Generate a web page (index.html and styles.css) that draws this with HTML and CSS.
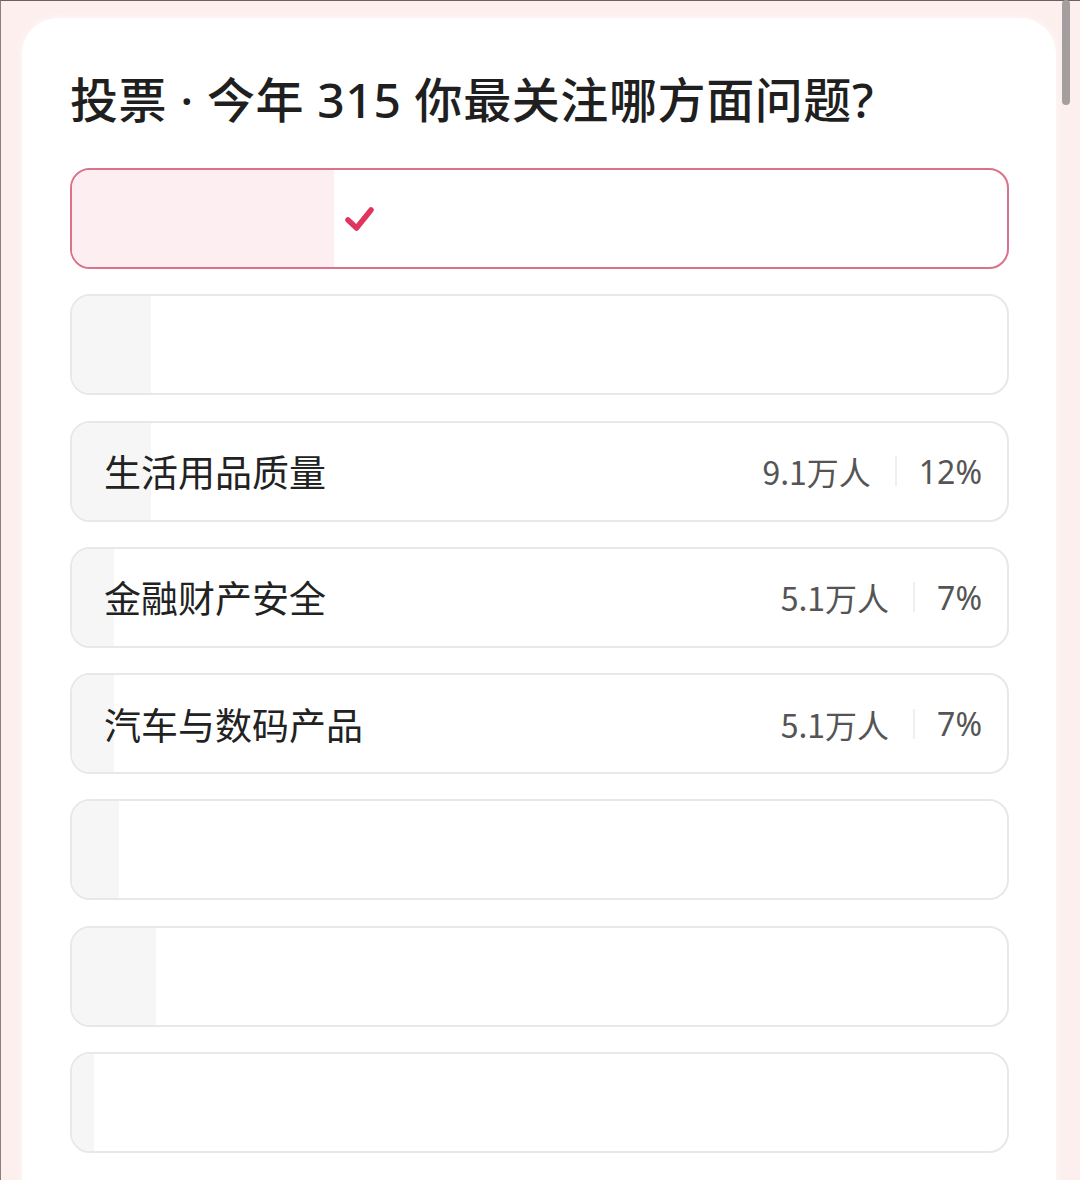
FILE: index.html
```html
<!DOCTYPE html>
<html>
<head>
  <meta charset="utf-8">
  <meta name="viewport" content="width=device-width">
  <title>投票</title>
  <link rel="stylesheet" href="styles.css">
</head>
<body>
  <div class="scrollbar"></div>
  <div class="card">
    <h1 class="title">投票 · 今年 315 你最关注哪方面问题?</h1>
    <div class="options">
      <div class="option on">
        <div class="bar" style="width: 28%;"></div>
        <svg class="check" width="32" height="30" viewBox="0 0 32 30">
          <path d="M4 16 L12.5 24 L27 6" fill="none" stroke="#e0355c" stroke-width="5.5" stroke-linecap="round" stroke-linejoin="round"/>
        </svg>
      </div>
      <div class="option">
        <div class="bar" style="width: 8.4%;"></div>
      </div>
      <div class="option">
        <div class="bar" style="width: 8.4%;"></div>
        <span class="label">生活用品质量</span>
        <span class="stat">
          <span class="count">9.1万人</span>
          <span class="sep"></span>
          <span class="pct">12%</span>
        </span>
      </div>
      <div class="option">
        <div class="bar" style="width: 4.5%;"></div>
        <span class="label">金融财产安全</span>
        <span class="stat">
          <span class="count">5.1万人</span>
          <span class="sep"></span>
          <span class="pct">7%</span>
        </span>
      </div>
      <div class="option">
        <div class="bar" style="width: 4.5%;"></div>
        <span class="label">汽车与数码产品</span>
        <span class="stat">
          <span class="count">5.1万人</span>
          <span class="sep"></span>
          <span class="pct">7%</span>
        </span>
      </div>
      <div class="option">
        <div class="bar" style="width: 5%;"></div>
      </div>
      <div class="option">
        <div class="bar" style="width: 9%;"></div>
      </div>
      <div class="option">
        <div class="bar" style="width: 2.4%;"></div>
      </div>
    </div>
  </div>
</body>
</html>
```

FILE: styles.css
```css
html, body{
  margin: 0;
  padding: 0;
}
body{
  height: 1180px;
  overflow: hidden;
  background: #fcefee;
  border-top: 1px solid #6b5f5f;
  border-left: 1px solid #8a7f7f;
  box-sizing: border-box;
  font-family: "Noto Sans CJK SC", "Noto Sans", sans-serif;
  color: #222;
}
.scrollbar{
  position: absolute;
  top: 0;
  left: 1062px;
  width: 8px;
  height: 105px;
  border-radius: 4px;
  background: #a59e9e;
}
.card{
  margin: 17px 24px 0 21px;
  min-height: 1200px;
  padding: 50px 47px 0 48px;
  background: #fff;
  border-radius: 36px 36px 0 0;
  box-shadow: 0 0 6px 2px #fdf6f5;
}
.title{
  margin: 0;
  font-family: "Noto Sans", "Noto Sans CJK SC", sans-serif;
  font-size: 48px;
  line-height: 64px;
  font-weight: 500;
  color: #1f1f1f;
  letter-spacing: 0.6px;
}
.options{
  display: flex;
  flex-direction: column;
  gap: 25.3px;
  margin-top: 36px;
}
.option{
  position: relative;
  overflow: hidden;
  display: flex;
  align-items: center;
  height: 97px;
  padding: 0 25px 0 32px;
  border: 2px solid #e8e8e8;
  border-radius: 20px;
  background: #fff;
}
.option.on{
  border-color: #d9728a;
}
.bar{
  position: absolute;
  top: 0;
  left: 0;
  bottom: 0;
  background: #f6f6f6;
}
.option.on .bar{
  background: #fdeef1;
}
.check{
  position: relative;
  margin-left: 240px;
}
.label{
  position: relative;
  font-size: 37px;
  color: #222;
}
.stat{
  position: relative;
  margin-left: auto;
  display: flex;
  align-items: center;
  font-family: "Noto Sans", "Noto Sans CJK SC", sans-serif;
  font-size: 32px;
  color: #555;
}
.count{
  font-family: "Noto Sans CJK SC", sans-serif;
}
.sep{
  width: 2px;
  height: 30px;
  margin: 0 22px 0 24px;
  background: #efefef;
}
```
